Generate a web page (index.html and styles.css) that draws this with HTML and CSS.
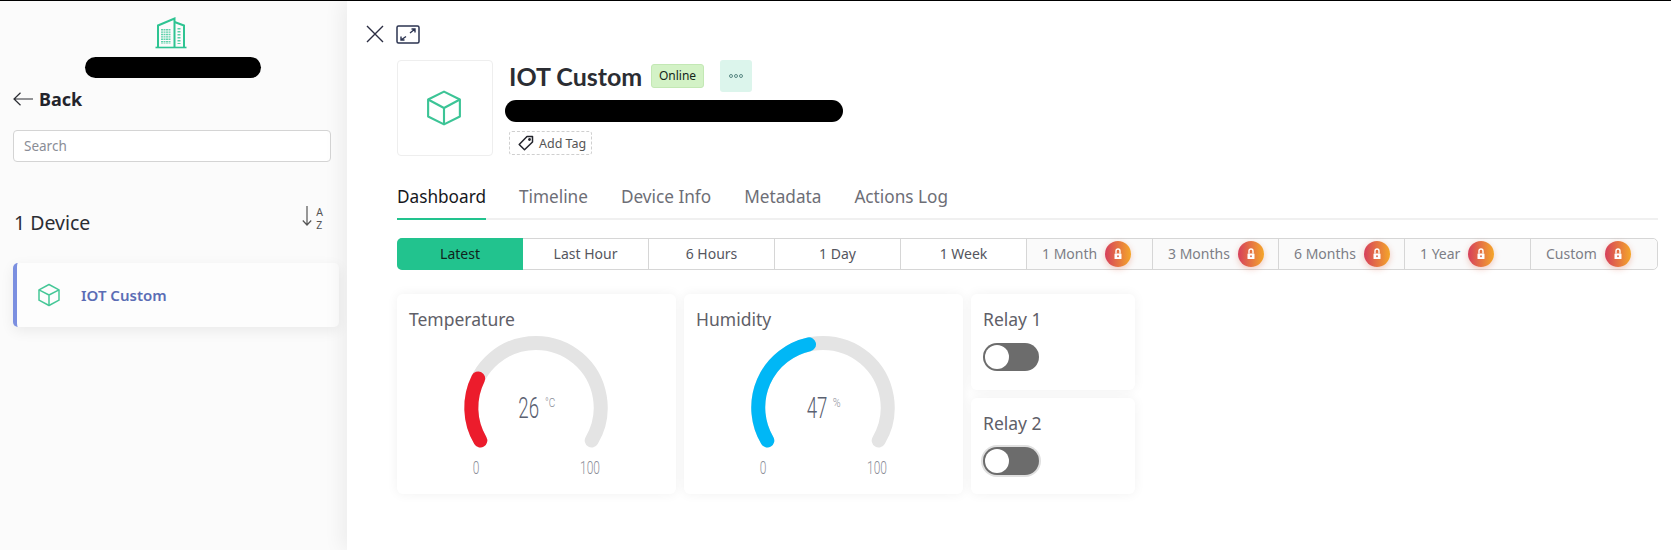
FILE: index.html
```html
<!DOCTYPE html>
<html lang="en">
<head>
<meta charset="utf-8">
<title>IOT Custom</title>
<link rel="stylesheet" href="styles.css">
</head>
<body>
<div class="app">
  <aside class="sidebar">
    <svg class="org-logo" viewBox="0 0 32 32" fill="none" stroke="#2ec492" stroke-width="2">
      <path d="M0.5 30.5H31.5" stroke-width="1.6"/>
      <path d="M3 30V8.5L19.5 1.5V30"/>
      <path d="M19.5 5L29 8.5V30"/>
      <path d="M7 12V27M9.5 12V27M12 12V27M14.500 12V27" stroke-width="2" stroke-dasharray="1.4 1" opacity=".75"/>
      <path d="M24 11V27" stroke-width="3" stroke-dasharray="1.500 1.500" opacity=".8"/>
    </svg>
    <div class="redact redact-org"></div>
    <div class="back">
      <svg class="back-arrow" viewBox="0 0 20 14" fill="none" stroke="#2b2d33" stroke-width="1.200"><path d="M20 7H1M7.500 0.800L1 7l6.500 6.200"/></svg>
      <span>Back</span>
    </div>
    <div class="search">Search</div>
    <div class="count-row">
      <span class="count">1 Device</span>
      <div class="sort">
        <svg class="sort-arrow" viewBox="0 0 10 20" fill="none" stroke="#555" stroke-width="1.200"><path d="M5 0V19M0.800 14.500L5 19l4.200-4.500"/></svg>
        <div class="sort-letters"><span>A</span><span>Z</span></div>
      </div>
    </div>
    <div class="device-card">
      <svg class="cube-small" viewBox="0 0 24 24" fill="none" stroke="#45c797" stroke-width="1.500" stroke-linejoin="round"><path d="M12 1.500L22 6.800V17.200L12 22.500L2 17.200V6.800Z"/><path d="M2 6.800L12 12L22 6.800M12 12V22.500"/></svg>
      <span>IOT Custom</span>
    </div>
  </aside>
  <main class="main">
    <div class="toolbar">
      <svg class="close-icon" viewBox="0 0 18 18" fill="none" stroke="#2b2d42" stroke-width="1.400"><path d="M1 1L17 17M17 1L1 17"/></svg>
      <svg class="expand-icon" viewBox="0 0 24 19" fill="none" stroke="#2b3350"><rect x="1" y="1" width="22" height="17" rx="1.500" stroke-width="1.500"/><path d="M14 8L19 4M15.500 4H19V7.500M10 11.500L5 15M8.500 15H5V11.500" stroke-width="1.400"/></svg>
    </div>
    <div class="device-head">
      <div class="device-image">
        <svg class="cube-large" viewBox="0 0 34 34" fill="none" stroke="#3cc496" stroke-width="2" stroke-linejoin="round"><path d="M17 1.500L32 9V25L17 32.500L2 25V9Z"/><path d="M2 9L17 17L32 9M17 17V32.500"/></svg>
      </div>
      <div class="device-meta">
        <div class="title-row">
          <h1>IOT Custom</h1>
          <span class="badge">Online</span>
          <span class="more"><i></i><i></i><i></i></span>
        </div>
        <div class="redact redact-id"></div>
        <div class="add-tag">
          <svg class="tag-icon" viewBox="0 0 16 16" fill="none" stroke="#23242c" stroke-width="1.500" stroke-linejoin="round"><path d="M1.200 9.500L9 1.500H14.500V7L6.500 14.800Z"/><circle cx="11.500" cy="4.500" r="0.700"/></svg>
          <span>Add Tag</span>
        </div>
      </div>
    </div>
    <nav class="tabs">
      <span class="tab active">Dashboard</span>
      <span class="tab">Timeline</span>
      <span class="tab">Device Info</span>
      <span class="tab">Metadata</span>
      <span class="tab">Actions Log</span>
    </nav>
    <div class="ranges">
      <span class="range current">Latest</span>
      <span class="range">Last Hour</span>
      <span class="range">6 Hours</span>
      <span class="range">1 Day</span>
      <span class="range">1 Week</span>
      <span class="range locked">1 Month<b class="lock"><svg viewBox="0 0 10 12" fill="none" stroke="#fff" stroke-width="1.400"><path d="M3 5.500V3a2 2 0 0 1 4 0V5.500"/><rect x="1.500" y="5.500" width="7" height="5.500" rx=".5" fill="#fff" stroke="none"/><circle cx="5" cy="8.200" r="1" fill="#e0705a" stroke="none"/></svg></b></span>
      <span class="range locked">3 Months<b class="lock"><svg viewBox="0 0 10 12" fill="none" stroke="#fff" stroke-width="1.400"><path d="M3 5.500V3a2 2 0 0 1 4 0V5.500"/><rect x="1.500" y="5.500" width="7" height="5.500" rx=".5" fill="#fff" stroke="none"/><circle cx="5" cy="8.200" r="1" fill="#e0705a" stroke="none"/></svg></b></span>
      <span class="range locked">6 Months<b class="lock"><svg viewBox="0 0 10 12" fill="none" stroke="#fff" stroke-width="1.400"><path d="M3 5.500V3a2 2 0 0 1 4 0V5.500"/><rect x="1.500" y="5.500" width="7" height="5.500" rx=".5" fill="#fff" stroke="none"/><circle cx="5" cy="8.200" r="1" fill="#e0705a" stroke="none"/></svg></b></span>
      <span class="range locked">1 Year<b class="lock"><svg viewBox="0 0 10 12" fill="none" stroke="#fff" stroke-width="1.400"><path d="M3 5.500V3a2 2 0 0 1 4 0V5.500"/><rect x="1.500" y="5.500" width="7" height="5.500" rx=".5" fill="#fff" stroke="none"/><circle cx="5" cy="8.200" r="1" fill="#e0705a" stroke="none"/></svg></b></span>
      <span class="range locked">Custom<b class="lock"><svg viewBox="0 0 10 12" fill="none" stroke="#fff" stroke-width="1.400"><path d="M3 5.500V3a2 2 0 0 1 4 0V5.500"/><rect x="1.500" y="5.500" width="7" height="5.500" rx=".5" fill="#fff" stroke="none"/><circle cx="5" cy="8.200" r="1" fill="#e0705a" stroke="none"/></svg></b></span>
    </div>
    <section class="widgets">
      <div class="widget gauge-card">
        <div class="widget-title">Temperature</div>
        <svg class="gauge" viewBox="0 0 279 160">
          <path class="track" d="M83.300 116.500A64.700 64.700 0 1 1 194.700 116.500"/>
          <path class="fill-temp" d="M83.300 116.500A64.700 64.700 0 0 1 81.200 54.500"/>
          <text class="g-value" transform="translate(121.300 94.300) scale(.644 1)">26</text>
          <text class="g-unit" transform="translate(148 82.700) scale(.8 1)">°C</text>
          <text class="g-scale" transform="translate(75.700 150) scale(.63 1)">0</text>
          <text class="g-scale" transform="translate(183 150) scale(.63 1)">100</text>
        </svg>
      </div>
      <div class="widget gauge-card">
        <div class="widget-title">Humidity</div>
        <svg class="gauge" viewBox="0 0 279 160">
          <path class="track" d="M83.300 116.500A64.700 64.700 0 1 1 194.700 116.500"/>
          <path class="fill-hum" d="M83.300 116.500A64.700 64.700 0 0 1 125 20.300"/>
          <text class="g-value" transform="translate(122.700 94.300) scale(.644 1)">47</text>
          <text class="g-unit" transform="translate(148.700 82.700) scale(.85 1)">%</text>
          <text class="g-scale" transform="translate(75.700 150) scale(.63 1)">0</text>
          <text class="g-scale" transform="translate(183 150) scale(.63 1)">100</text>
        </svg>
      </div>
      <div class="relay-col">
        <div class="widget relay">
          <div class="widget-title">Relay 1</div>
          <div class="switch"><span class="knob"></span></div>
        </div>
        <div class="widget relay">
          <div class="widget-title">Relay 2</div>
          <div class="switch focus"><span class="knob"></span></div>
        </div>
      </div>
    </section>
  </main>
</div>
</body>
</html>
```
FILE: styles.css
```css
* { box-sizing: border-box; }
html, body { margin: 0; height: 100%; overflow: hidden; }
body { border-top: 1px solid #000; background: #fff; color: #2b2d33; font-family: "Noto Sans", "Open Sans", sans-serif; }
.app { display: flex; height: 549px; }

/* Sidebar */
.sidebar { flex: 0 0 347px; background: #fbfbfb; padding: 16px 0 0 13px; }
.org-logo { display: block; width: 32px; height: 32px; margin-left: 142px; }
.redact { background: #000; border-radius: 11px; }
.redact-org { width: 176px; height: 21px; margin: 8px 0 0 72px; }
.back { display: flex; align-items: center; gap: 6px; margin-top: 7px; height: 28px; font-size: 18px; font-weight: 700; color: #23242c; }
.back-arrow { width: 20px; height: 14px; }
.search { margin-top: 17px; width: 318px; height: 32px; line-height: 30px; padding-left: 10px; border: 1px solid #d4d4d4; border-radius: 4px; background: #fff; font-size: 13.500px; color: #8a8d96; }
.count-row { display: flex; justify-content: space-between; align-items: center; margin-top: 48px; padding: 0 2px 0 1px; width: 312px; height: 24px; }
.count { font-size: 19.500px; color: #2b2d33; }
.sort { display: flex; gap: 4px; margin-top: -6px; }
.sort-arrow { width: 10px; height: 20px; }
.sort-letters { display: flex; flex-direction: column; font-size: 10.500px; line-height: 13px; color: #555; }
.device-card { display: flex; align-items: center; gap: 20px; margin-top: 29px; width: 326px; height: 64px; padding-left: 20px; background: #fdfdfd; border-left: 4px solid #7b8fe0; border-radius: 5px; box-shadow: 0 4px 14px rgba(0,0,0,.07); font-size: 15px; font-weight: 600; color: #5b6db5; }
.cube-small { width: 24px; height: 24px; }

/* Main */
.main { flex: 1; min-width: 0; background: #fff; padding: 23px 13px 0 50px; box-shadow: -6px 0 18px rgba(0,0,0,.06); position: relative; }
.toolbar { display: flex; align-items: center; gap: 12px; margin-left: -31px; height: 20px; }
.close-icon { width: 18px; height: 18px; }
.expand-icon { width: 24px; height: 19px; }
.device-head { display: flex; gap: 12px; margin-top: 16px; }
.device-image { display: flex; align-items: center; justify-content: center; width: 96px; height: 96px; border: 1px solid #eee; border-radius: 4px; }
.cube-large { width: 36px; height: 36px; margin: 0 2px 1px 0; }
.device-meta { display: flex; flex-direction: column; }
.title-row { display: flex; align-items: center; height: 32px; margin-left: 4px; }
h1 { margin: 0; width: 142px; font-family: "Lato", sans-serif; font-size: 25px; font-weight: 700; color: #2b2d33; white-space: nowrap; }
.badge { width: 53px; height: 24px; line-height: 22px; text-align: center; font-size: 12px; color: #14251a; background: #d3f2c6; border: 1px solid #c3e8b4; border-radius: 3px; }
.more { display: flex; align-items: center; justify-content: center; gap: 1px; margin-left: 16px; width: 32px; height: 32px; background: #dcf5ec; border-radius: 3px; }
.more i { width: 4px; height: 4px; border: 1px solid #5b8a85; border-radius: 50%; }
.redact-id { width: 338px; height: 22px; margin-top: 8px; }
.add-tag { display: flex; align-items: center; gap: 5px; align-self: flex-start; margin: 9px 0 0 4px; width: 83px; height: 24px; padding-left: 8px; border: 1px dashed #cfcfcf; border-radius: 3px; font-size: 12.500px; color: #555; white-space: nowrap; }
.tag-icon { flex: none; width: 16px; height: 16px; }

.tabs { display: flex; gap: 33px; margin-top: 21px; height: 43px; border-bottom: 2px solid #f0f0f0; font-size: 17.200px; color: #6d6e76; }
.tab { height: 43px; line-height: 40px; white-space: nowrap; }
.tab.active { color: #16171c; border-bottom: 2px solid #22c38e; }

.ranges { display: flex; margin-top: 18px; width: 1261px; height: 32px; border: 1px solid #d6d6d6; border-radius: 5px; font-size: 14px; line-height: 28px; color: #55565e; }
.range { flex: 0 0 126px; display: flex; align-items: center; justify-content: center; border-right: 1px solid #d6d6d6; white-space: nowrap; padding-bottom: 1px; }
.range:last-child { flex: 1 1 0; min-width: 0; border-right: 0; border-radius: 0 5px 5px 0; }
.range.current { margin: -1px 0 -1px -1px; background: #22c38e; color: #10241c; border: 0; border-radius: 5px 0 0 5px; }
.range.locked { justify-content: flex-start; gap: 8px; padding: 0 0 1px 15px; background: #fafafa; color: #7d7e86; }
.lock { flex: none; display: flex; align-items: center; justify-content: center; width: 26px; height: 26px; margin-top: 1px; border-radius: 50%; background: linear-gradient(90deg, #d6405c, #f4a62a); box-shadow: 0 2px 6px rgba(220,90,60,.3); }
.lock svg { width: 10px; height: 12px; }

.widgets { display: flex; gap: 8px; margin-top: 24px; }
.widget { background: #fff; border-radius: 6px; box-shadow: 0 0 12px rgba(0,0,0,.06); }
.widget-title { font-size: 17.500px; color: #5f6068; line-height: 24px; }
.gauge-card { position: relative; width: 279px; height: 200px; padding: 13px 12px; }
.gauge { position: absolute; left: 0; top: 30px; width: 279px; height: 160px; }
.track, .fill-temp, .fill-hum { fill: none; stroke-width: 14; stroke-linecap: round; }
.track { stroke: #e4e4e4; }
.fill-temp { stroke: #ec1c2c; }
.fill-hum { stroke: #00b7f6; }
.gauge text { font-family: "Roboto", sans-serif; font-weight: 300; }
.g-value { font-size: 29px; fill: #5a6070; }
.g-unit { font-size: 12.500px; fill: #8c8e98; }
.g-scale { font-size: 19px; fill: #8c8e98; }
.relay-col { display: flex; flex-direction: column; gap: 8px; width: 164px; }
.relay { height: 96px; padding: 13px 12px; }
.switch { display: flex; align-items: center; margin-top: 12px; width: 56px; height: 28px; padding-left: 2px; background: #6c6c6c; border-radius: 14px; }
.switch.focus { box-shadow: 0 0 0 2px #e0e0e0; }
.knob { width: 24px; height: 24px; background: #fff; border-radius: 50%; }
```
